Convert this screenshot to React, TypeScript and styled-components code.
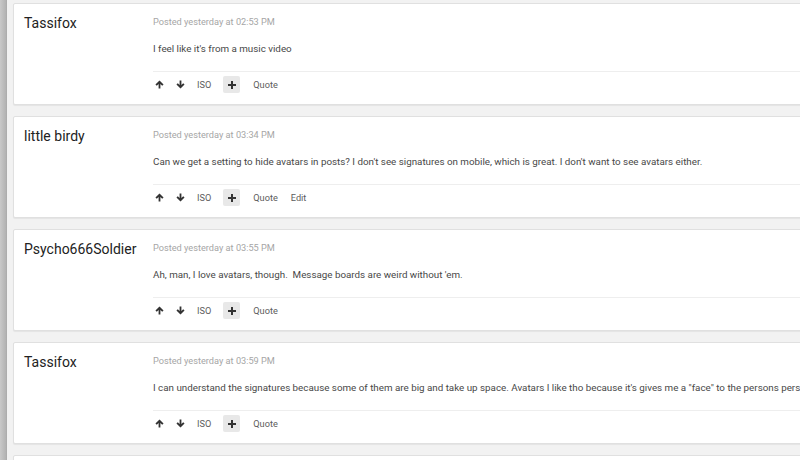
import React from "react";
import styled, { createGlobalStyle } from "styled-components";

const Global = createGlobalStyle`
  html, body {
    margin: 0;
    padding: 0;
    background: #f2f2f2;
    overflow: hidden;
  }
  body {
    font-family: Roboto, "Liberation Sans", Arial, sans-serif;
  }
`;

type Post = {
  author: string;
  time: string;
  text: string;
  canEdit?: boolean;
};

const posts: Post[] = [
  { author: "Tassifox", time: "02:53 PM", text: "I feel like it's from a music video" },
  {
    author: "little birdy",
    time: "03:34 PM",
    text: "Can we get a setting to hide avatars in posts? I don't see signatures on mobile, which is great. I don't want to see avatars either.",
    canEdit: true,
  },
  {
    author: "Psycho666Soldier",
    time: "03:55 PM",
    text: "Ah, man, I love avatars, though.\u00a0 Message boards are weird without 'em.",
  },
  {
    author: "Tassifox",
    time: "03:59 PM",
    text: "I can understand the signatures because some of them are big and take up space. Avatars I like tho because it's gives me a \"face\" to the persons personality and posts.",
  },
  { author: "", time: "04:02 PM", text: "" },
];

const Page = styled.div`
  display: flex;
  height: 460px;
  overflow: hidden;
`;

const Strip = styled.div`
  width: 7px;
  flex-shrink: 0;
  background: linear-gradient(to right, #c9c9c9, #b4b4b4 80%, #a9a9a9);
`;

const Feed = styled.div`
  display: flex;
  flex-direction: column;
  gap: 11px;
  padding: 3px 0 0 6px;
  width: 1100px;
  flex-shrink: 0;
`;

const Card = styled.div`
  display: flex;
  background: #fff;
  border: 1px solid #e0e0e0;
  border-radius: 2px;
  box-shadow: 0 1px 1px rgba(0, 0, 0, 0.06);
  padding: 10px 0 7px 10px;
`;

const Author = styled.div`
  width: 129px;
  flex-shrink: 0;
  font-size: 14px;
  line-height: 18px;
  color: #222;
`;

const Content = styled.div`
  flex: 1;
  display: flex;
  flex-direction: column;
`;

const Meta = styled.div`
  font-size: 9.2px;
  line-height: 16px;
  color: #a6a6a6;
`;

const Body = styled.div`
  margin-top: 10px;
  font-size: 9.8px;
  line-height: 18px;
  color: #484848;
  white-space: nowrap;
  padding-bottom: 13px;
  border-bottom: 1px solid #eeeeee;
`;

const Actions = styled.div`
  display: flex;
  align-items: center;
  height: 25px;
  font-size: 9.2px;
  color: #5c5c5c;
`;

const Vote = styled.span`
  display: flex;
  align-items: center;
  justify-content: center;
  width: 12px;
  margin-right: 9px;
  &:nth-child(2) {
    margin-right: 11px;
  }
`;

const Action = styled.span<{ $gap?: number }>`
  margin-right: ${(p) => p.$gap ?? 13}px;
`;

const PlusBox = styled.span`
  display: flex;
  align-items: center;
  justify-content: center;
  width: 17px;
  height: 17px;
  background: #e8e8e8;
  border-radius: 2px;
  margin-right: 13px;
`;

const Arrow = ({ down }: { down?: boolean }) => (
  <svg width="9" height="9" viewBox="0 0 10 10" style={down ? { transform: "rotate(180deg)" } : undefined}>
    <path d="M5 0.5 L9.5 5 L8 6.4 L6 4.4 V9.5 H4 V4.4 L2 6.4 L0.5 5 Z" fill="#333" />
  </svg>
);

const Plus = () => (
  <svg width="8" height="8" viewBox="0 0 8 8">
    <path d="M3 0 H5 V3 H8 V5 H5 V8 H3 V5 H0 V3 H3 Z" fill="#333" />
  </svg>
);

const PostCard = ({ post }: { post: Post }) => (
  <Card>
    <Author>{post.author}</Author>
    <Content>
      <Meta>Posted yesterday at {post.time}</Meta>
      <Body>{post.text}</Body>
      <Actions>
        <Vote>
          <Arrow />
        </Vote>
        <Vote>
          <Arrow down />
        </Vote>
        <Action $gap={12}>ISO</Action>
        <PlusBox>
          <Plus />
        </PlusBox>
        <Action>Quote</Action>
        {post.canEdit && <Action>Edit</Action>}
      </Actions>
    </Content>
  </Card>
);

export default function App() {
  return (
    <>
      <Global />
      <Page>
        <Strip />
        <Feed>
          {posts.map((p, i) => (
            <PostCard key={i} post={p} />
          ))}
        </Feed>
      </Page>
    </>
  );
}
